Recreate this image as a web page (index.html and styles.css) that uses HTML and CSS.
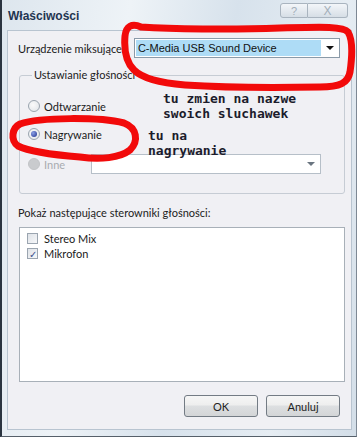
FILE: index.html
```html
<!DOCTYPE html>
<html lang="pl">
<head>
    <meta charset="UTF-8">
    <title>Właściwości</title>
    <link rel="stylesheet" href="styles.css">
</head>
<body>
    <div class="window">
        <!-- Title bar -->
        <div class="titlebar">
            <span class="title">Właściwości</span>
            <div class="caption-buttons">
                <span class="cap-btn help">?</span>
                <span class="cap-btn close">X</span>
            </div>
        </div>

        <!-- Dialog content -->
        <div class="panel">
            <div class="device-row">
                <label class="device-label">Urządzenie miksujące</label>
                <div class="combo">
                    <span class="combo-value">C-Media USB Sound Device</span>
                    <span class="combo-arrow"></span>
                </div>
            </div>

            <fieldset class="group">
                <legend>Ustawianie głośności</legend>
                <div class="radio-row first">
                    <span class="radio"></span>
                    <span>Odtwarzanie</span>
                </div>
                <div class="radio-row second">
                    <span class="radio checked"></span>
                    <span>Nagrywanie</span>
                </div>
                <div class="radio-row third disabled">
                    <span class="radio"></span>
                    <span class="inne-label">Inne</span>
                    <div class="combo small">
                        <span class="combo-value"></span>
                        <span class="combo-arrow"></span>
                    </div>
                </div>
            </fieldset>

            <div class="list-label">Pokaż następujące sterowniki głośności:</div>
            <div class="listbox">
                <div class="check-row">
                    <span class="checkbox"></span>
                    <span>Stereo Mix</span>
                </div>
                <div class="check-row">
                    <span class="checkbox checked">&#10003;</span>
                    <span>Mikrofon</span>
                </div>
            </div>

            <div class="buttons">
                <button class="btn">OK</button>
                <button class="btn">Anuluj</button>
            </div>
        </div>

        <!-- Handwritten notes drawn over the screenshot -->
        <svg class="scribbles" width="357" height="437" viewBox="0 0 357 437">
            <path d="M125,36 C126,26 132,23 141,27 C170,29 230,30 280,28 C320,27 343,26 348,32 C353,40 352,58 350,72 C348,83 340,87 320,87 C270,88 215,87 185,85 C160,83 143,79 134,70 C126,62 124,48 125,36 Z"/>
            <path d="M20,124 C40,117 100,117 124,123 C137,128 139,141 130,150 C120,158 100,160 80,157 C55,155 30,152 18,146 C10,140 12,128 20,124 Z"/>
        </svg>
        <div class="note note-device">tu zmien na nazwe<br>swoich sluchawek</div>
        <div class="note note-record">tu na<br>nagrywanie</div>
    </div>
</body>
</html>
```

FILE: styles.css
```css
* {
    margin: 0;
    padding: 0;
    box-sizing: border-box;
}

body {
    background: #6f7780;
    font-family: Lato, 'Liberation Sans', sans-serif;
    font-size: 11px;
    color: #1a1a1a;
}

/* Window frame */
.window {
    position: relative;
    width: 357px;
    height: 437px;
    display: flex;
    flex-direction: column;
    padding: 0 4px 6px 5px;
    background: linear-gradient(100deg, #dde6ee 0%, #eef3f7 30%, #d7e2ec 55%, #e6edf3 80%, #d3dee8 100%);
    border-left: 2px solid #2a3440;
    border-right: 1px solid #7d8894;
    border-bottom: 1px solid #56606a;
}

.titlebar {
    height: 30px;
    display: flex;
    justify-content: space-between;
    align-items: flex-start;
    flex-shrink: 0;
}

.title {
    margin: 9px 0 0 1px;
    font-family: 'Liberation Sans', Arial, sans-serif;
    font-weight: bold;
    font-size: 12px;
    color: #1f3550;
}

.caption-buttons {
    display: flex;
    margin: 3px 4px 0 0;
}

.cap-btn {
    height: 15px;
    display: flex;
    justify-content: center;
    align-items: center;
    border: 1px solid #a9b4bf;
    background: linear-gradient(#f3f6f9, #d6dee6);
    color: #a3aeb9;
    font-family: 'Liberation Sans', Arial, sans-serif;
    font-size: 11px;
}

.cap-btn.help {
    width: 28px;
    border-radius: 3px 0 0 3px;
}

.cap-btn.close {
    width: 40px;
    border-left: none;
    border-radius: 0 3px 3px 0;
    font-size: 12px;
}

/* Content panel */
.panel {
    flex: 1;
    background: #f0f0f4;
    border: 1px solid #b8c4d0;
    padding: 7px 11px 12px 10px;
    display: flex;
    flex-direction: column;
}

.device-row {
    display: flex;
    align-items: center;
    height: 20px;
}

.device-label {
    width: 117px;
    white-space: nowrap;
}

.combo {
    width: 208px;
    height: 20px;
    display: flex;
    align-items: center;
    border: 1px solid #8a9aa8;
    background: #fff;
    padding: 1px;
}

.combo-value {
    flex: 1;
    height: 100%;
    display: flex;
    align-items: center;
    padding-left: 2px;
    background: #aedcf6;
    font-family: 'Liberation Sans', Arial, sans-serif;
    font-size: 11px;
    color: #111;
}

.combo-arrow {
    width: 17px;
    height: 100%;
    display: flex;
    justify-content: center;
    align-items: center;
}

.combo-arrow::after {
    content: "";
    border-left: 4px solid transparent;
    border-right: 4px solid transparent;
    border-top: 4px solid #111;
}

/* Group box */
.group {
    margin: 10px 0 0 1px;
    width: 326px;
    height: 126px;
    border: 1px solid #c6ccd4;
    border-radius: 3px;
    padding: 0 8px;
}

.group legend {
    margin-left: 4px;
    padding: 0 2px;
    line-height: 14px;
    color: #222;
}

.radio-row {
    display: flex;
    align-items: center;
    height: 18px;
    gap: 4px;
}

.radio-row.first {
    margin-top: 15px;
}

.radio-row.second {
    margin-top: 10px;
}

.radio-row.third {
    margin-top: 11px;
    height: 20px;
}

.radio {
    width: 12px;
    height: 12px;
    border-radius: 50%;
    border: 1px solid #9aa4ae;
    background: radial-gradient(circle at 40% 40%, #fafafa, #dfe3e7);
    display: flex;
    justify-content: center;
    align-items: center;
}

.radio.checked::after {
    content: "";
    width: 6px;
    height: 6px;
    border-radius: 50%;
    background: radial-gradient(circle at 35% 35%, #8aa0e6, #1d2f8c);
}

.disabled .radio {
    background: #c9cbce;
    border-color: #c2c4c7;
}

.disabled .inne-label {
    color: #a8acb0;
    width: 43px;
}

.combo.small {
    width: 230px;
    border-color: #b6bfc8;
}

.combo.small .combo-value {
    background: #fff;
}

.combo.small .combo-arrow::after {
    border-top-color: #6a7580;
}

/* Volume controls list */
.list-label {
    margin-top: 12px;
    line-height: 14px;
    color: #222;
}

.listbox {
    margin: 7px 0 0 1px;
    width: 326px;
    height: 155px;
    border: 1px solid #a8b0b8;
    background: #fff;
    padding: 3px 7px;
}

.check-row {
    display: flex;
    align-items: center;
    height: 15px;
    gap: 6px;
}

.checkbox {
    width: 11px;
    height: 11px;
    border: 1px solid #9ba5b0;
    background: linear-gradient(135deg, #dfe3e8, #f6f7f9);
    display: flex;
    justify-content: center;
    align-items: center;
    font-size: 10px;
    line-height: 1;
    color: #3b4f8c;
}

/* Dialog buttons */
.buttons {
    margin-top: auto;
    display: flex;
    justify-content: flex-end;
    gap: 8px;
}

.btn {
    width: 74px;
    height: 22px;
    border: 1px solid #737b84;
    border-radius: 3px;
    background: linear-gradient(#f6f6f6 0%, #eeeeee 45%, #dddfe1 50%, #d3d5d7 100%);
    font-family: Lato, 'Liberation Sans', sans-serif;
    font-size: 11px;
    color: #222;
}

/* Annotations */
.scribbles {
    position: absolute;
    top: 0;
    left: -2px;
}

.scribbles path {
    fill: none;
    stroke: #f20a0a;
    stroke-width: 7;
    stroke-linecap: round;
    stroke-linejoin: round;
}

.note {
    position: absolute;
    font-family: 'DejaVu Sans Mono', monospace;
    font-weight: bold;
    font-size: 13px;
    line-height: 15px;
    color: #1c1c2c;
}

.note-device {
    left: 161px;
    top: 91px;
}

.note-record {
    left: 146px;
    top: 128px;
}
```
